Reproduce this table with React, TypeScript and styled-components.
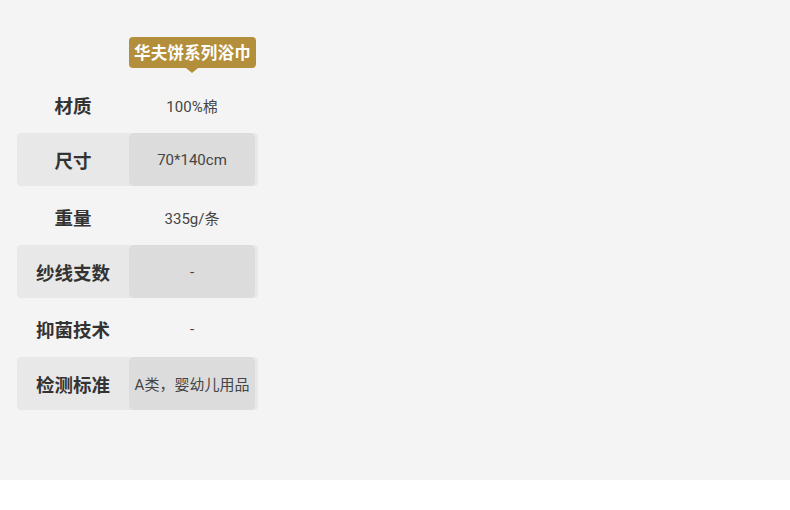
import React from "react";
import styled, { createGlobalStyle } from "styled-components";

const Global = createGlobalStyle`
  html, body { margin: 0; padding: 0; background: #ffffff; }
  * { box-sizing: border-box; }
`;

const Page = styled.div`
  width: 790px;
  height: 480px;
  background: #f4f4f4;
  padding: 37px 0 0 17px;
  font-family: "Noto Sans CJK SC", "Noto Sans", sans-serif;
`;

const Table = styled.div`
  width: 241px;
  display: flex;
  flex-direction: column;
`;

const Header = styled.div`
  display: grid;
  grid-template-columns: 112px 127px;
  height: 40px;
`;

const Badge = styled.div`
  grid-column: 2;
  position: relative;
  height: 31px;
  background: #b48f3b;
  border-radius: 4px;
  color: #ffffff;
  font-weight: 700;
  font-size: 16.5px;
  line-height: 31px;
  text-align: center;
  letter-spacing: 0.2px;
  &::after {
    content: "";
    position: absolute;
    left: 57px;
    bottom: -5px;
    border-left: 6px solid transparent;
    border-right: 6px solid transparent;
    border-top: 5px solid #b48f3b;
  }
`;

const Row = styled.div<{ $shaded?: boolean }>`
  display: grid;
  grid-template-columns: 112px 126px;
  height: ${(p) => (p.$shaded ? "53px" : "56px")};
  margin-bottom: ${(p) => (p.$shaded ? "3px" : "0")};
  background: ${(p) => (p.$shaded ? "#e8e8e8" : "transparent")};
  border-radius: 4px;
`;

const Label = styled.div`
  display: flex;
  align-items: center;
  justify-content: center;
  font-size: 18.5px;
  font-weight: 700;
  color: #333333;
`;

const Value = styled.div<{ $shaded?: boolean }>`
  display: flex;
  align-items: center;
  justify-content: center;
  font-family: Roboto, "Noto Sans CJK SC", sans-serif;
  font-size: 15px;
  color: #454545;
  background: ${(p) => (p.$shaded ? "#dcdcdc" : "transparent")};
  border-radius: 5px;
  white-space: nowrap;
`;

const rows = [
  ["材质", "100%棉"],
  ["尺寸", "70*140cm"],
  ["重量", "335g/条"],
  ["纱线支数", "-"],
  ["抑菌技术", "-"],
  ["检测标准", "A类，婴幼儿用品"],
];

export default function App() {
  return (
    <>
      <Global />
      <Page>
        <Table>
          <Header>
            <Badge>华夫饼系列浴巾</Badge>
          </Header>
          {rows.map(([k, v], i) => {
            const shaded = i % 2 === 1;
            return (
              <Row key={k} $shaded={shaded}>
                <Label>{k}</Label>
                <Value $shaded={shaded}>{v}</Value>
              </Row>
            );
          })}
        </Table>
      </Page>
    </>
  );
}
